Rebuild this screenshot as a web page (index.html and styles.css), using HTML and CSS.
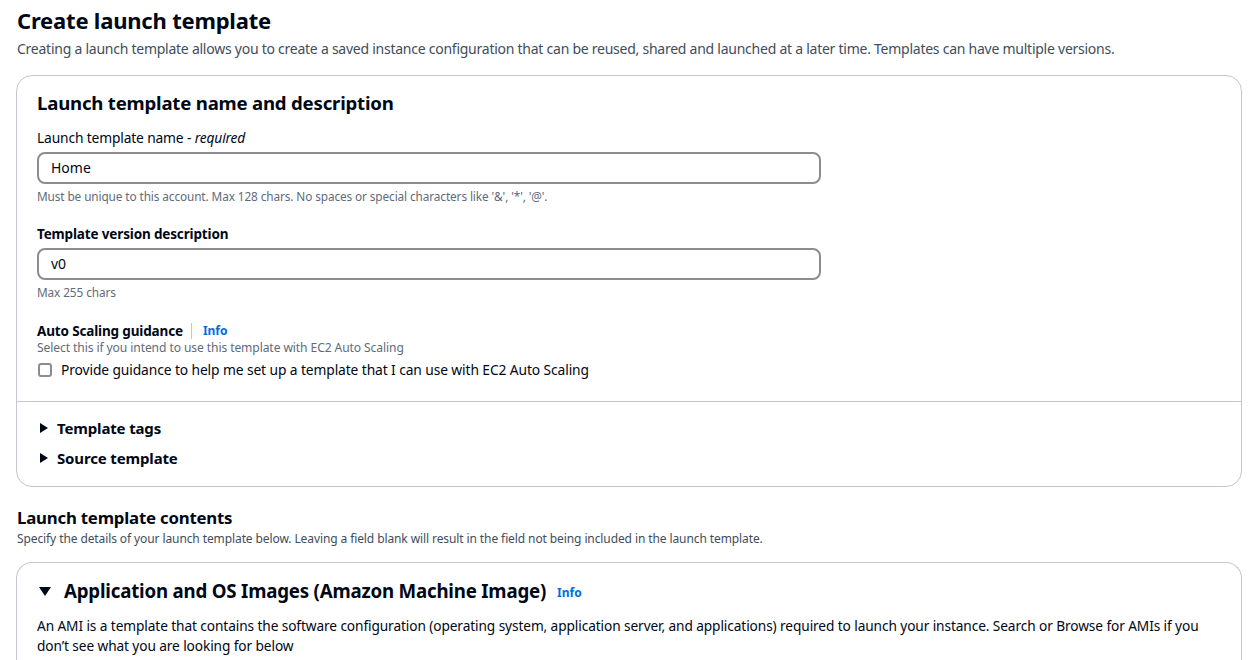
FILE: index.html
```html
<!DOCTYPE html>
<html>
<head>
<meta charset="utf-8">
<link rel="stylesheet" href="styles.css">
</head>
<body>
<div class="page">
  <header class="page-header">
    <h1 class="page-title">Create launch template</h1>
    <p class="page-desc">Creating a launch template allows you to create a saved instance configuration that can be reused, shared and launched at a later time. Templates can have multiple versions.</p>
  </header>

  <section class="card">
    <div class="card-body">
      <h2 class="card-title">Launch template name and description</h2>

      <div class="field">
        <label class="field-label normal">Launch template name - <i>required</i></label>
        <div class="input">Home</div>
        <div class="hint">Must be unique to this account. Max 128 chars. No spaces or special characters like '&amp;', '*', '@'.</div>
      </div>

      <div class="field">
        <label class="field-label">Template version description</label>
        <div class="input">v0</div>
        <div class="hint">Max 255 chars</div>
      </div>

      <div class="field field-auto">
        <div class="label-row">
          <span class="field-label">Auto Scaling guidance</span>
          <span class="sep"></span>
          <a class="info">Info</a>
        </div>
        <div class="hint desc">Select this if you intend to use this template with EC2 Auto Scaling</div>
        <div class="check-row">
          <span class="checkbox"></span>
          <span>Provide guidance to help me set up a template that I can use with EC2 Auto Scaling</span>
        </div>
      </div>
    </div>
    <div class="card-foot">
      <div class="expander"><span class="tri"></span>Template tags</div>
      <div class="expander"><span class="tri"></span>Source template</div>
    </div>
  </section>

  <section class="section-head">
    <h2 class="section-title">Launch template contents</h2>
    <p class="section-desc">Specify the details of your launch template below. Leaving a field blank will result in the field not being included in the launch template.</p>
  </section>

  <section class="card card-open">
    <div class="card-body ami">
      <div class="ami-head">
        <span class="tri-down"></span>
        <h2 class="ami-title">Application and OS Images (Amazon Machine Image)</h2>
        <a class="info">Info</a>
      </div>
      <p class="ami-desc">An AMI is a template that contains the software configuration (operating system, application server, and applications) required to launch your instance. Search or Browse for AMIs if you don’t see what you are looking for below</p>
    </div>
  </section>
</div>
</body>
</html>
```

FILE: styles.css
```css
* { box-sizing: border-box; }
html, body { margin: 0; padding: 0; background: #fff; }
body {
  font-family: "Noto Sans", "Open Sans", sans-serif;
  color: #000716;
  font-size: 14px;
  overflow: hidden;
}
.page { padding: 4px 6px 0 16px; }
.page-header { padding-left: 1px; }
.page-title {
  margin: 0;
  font-size: 22px;
  line-height: 32px;
  font-weight: 700;
  letter-spacing: -0.2px;
}
.page-desc {
  margin: 3px 0 0;
  font-size: 14px;
  line-height: 20px;
  color: #414d5c;
  letter-spacing: -0.25px;
}
.card {
  margin-top: 16px;
  border: 1px solid #c6c6cd;
  border-radius: 16px;
  background: #fff;
}
.card-body { padding: 14px 20px 21px; }
.card-title {
  margin: 0;
  font-size: 18.6px;
  line-height: 26px;
  font-weight: 700;
  letter-spacing: -0.2px;
}
.field { margin-top: 12px; }
.field + .field { margin-top: 20px; }
.field-label {
  display: block;
  font-size: 13.5px;
  line-height: 20px;
  font-weight: 700;
  letter-spacing: -0.15px;
}
.field-label.normal { font-weight: 400; font-size: 13.8px; }
.input {
  margin-top: 4px;
  width: 784px;
  height: 32px;
  border: 2px solid #8c8c94;
  border-radius: 8px;
  padding: 0 12px;
  font-size: 14px;
  line-height: 28px;
}
.hint {
  margin-top: 4px;
  font-size: 11.8px;
  line-height: 16px;
  color: #5f6b7a;
  letter-spacing: -0.1px;
}
.field + .field.field-auto { margin-top: 21px; }
.label-row { display: flex; align-items: center; }
.label-row .field-label { display: inline; font-size: 13.5px; }
.sep {
  width: 1px;
  height: 16px;
  background: #c6c6cd;
  margin: 0 11px 0 8px;
}
.info {
  color: #006ce0;
  font-size: 12px;
  font-weight: 700;
  line-height: 20px;
}
.hint.desc { margin-top: -1px; font-size: 12.1px; }
.check-row {
  display: flex;
  align-items: center;
  gap: 9px;
  margin-top: 4px;
  font-size: 13.8px;
  line-height: 20px;
  letter-spacing: -0.1px;
}
.checkbox {
  width: 14px;
  height: 14px;
  border: 2px solid #8c8c94;
  border-radius: 3px;
  flex: none;
  margin-left: 1px;
}
.card-foot {
  border-top: 1px solid #c6c6cd;
  padding: 15px 20px 17px;
}
.expander {
  display: flex;
  align-items: center;
  font-size: 15px;
  line-height: 22px;
  font-weight: 700;
  letter-spacing: -0.15px;
}
.expander + .expander { margin-top: 8px; }
.tri {
  width: 0; height: 0;
  border-top: 5px solid transparent;
  border-bottom: 5px solid transparent;
  border-left: 8px solid #000716;
  margin: 0 9px 0 3px;
}
.section-head { margin-top: 19px; padding-left: 1px; }
.section-title {
  margin: 0;
  font-size: 16.8px;
  line-height: 24px;
  font-weight: 700;
  letter-spacing: -0.2px;
}
.section-desc {
  margin: 1px 0 0;
  font-size: 12px;
  line-height: 16px;
  color: #414d5c;
  letter-spacing: -0.1px;
}
.card-open { margin-top: 15px; border-bottom: none; border-radius: 16px 16px 0 0; height: 120px; }
.card-body.ami { padding: 14px 20px 0; }
.ami-head { display: flex; align-items: center; }
.tri-down {
  width: 0; height: 0;
  border-left: 6px solid transparent;
  border-right: 6px solid transparent;
  border-top: 9px solid #000716;
  margin: 0 13px 0 2px;
}
.ami-title {
  margin: 0;
  font-size: 18.7px;
  line-height: 28px;
  font-weight: 700;
  letter-spacing: -0.2px;
}
.ami-head .info { margin-left: 11px; margin-top: 4px; }
.ami-desc {
  margin: 11px 0 0;
  font-size: 13.7px;
  line-height: 20px;
  color: #000716;
  letter-spacing: -0.1px;
}
```
